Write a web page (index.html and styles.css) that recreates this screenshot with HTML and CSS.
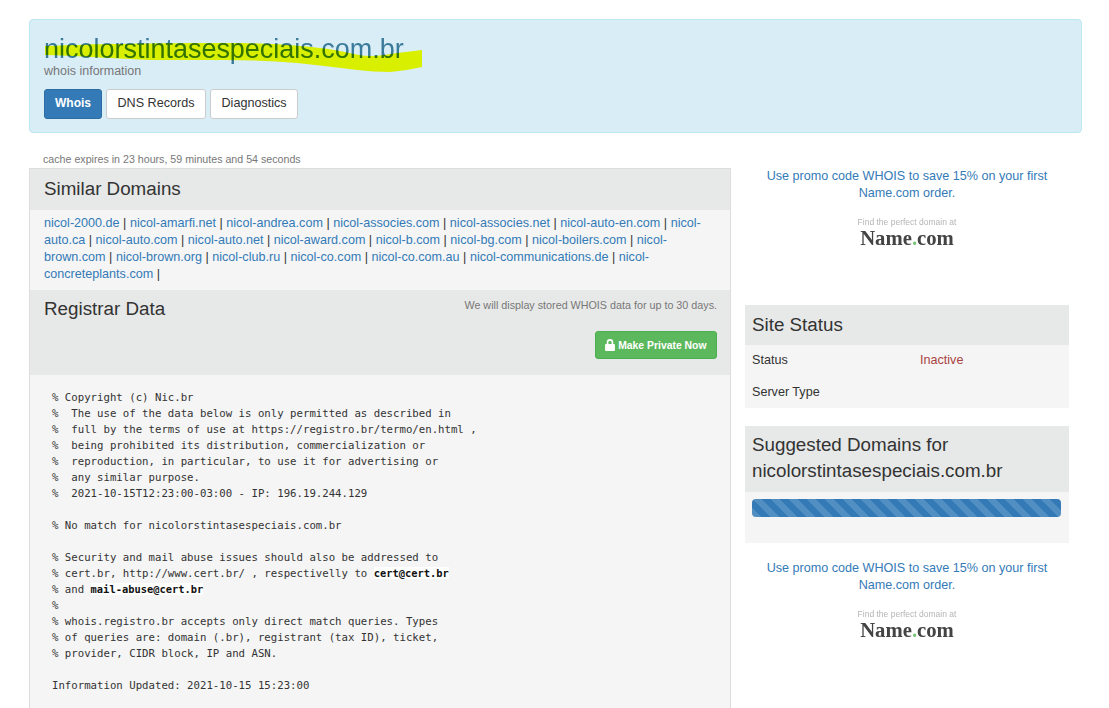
FILE: index.html
```html
<!DOCTYPE html>
<html lang="en">
<head>
<meta charset="utf-8">
<title>nicolorstintasespeciais.com.br whois</title>
<link rel="stylesheet" href="styles.css">
</head>
<body>
<div class="page">
  <header class="hero">
    <h1 class="domain"><svg class="marker" viewBox="0 0 380 34" aria-hidden="true"><path d="M1 4 C30 3 50 2 76 2 C110 1 150 1 181 1 C210 1 235 2 256 4 C265 5 270 5 276 6 C285 7 292 8 301 10 C310 12 318 14 326 14 C335 14 345 12 353 11 C362 10 370 9 378 8 L378 25 C368 27 358 29 346 30 C335 30 324 29 313 28 C295 26 275 23 253 21 C230 19 205 18 181 18 C155 18 130 18 106 18 C85 17 65 16 46 15 C30 14 15 13 1 13 Z" fill="#d9ef00"/></svg><span class="domain-text">nicolorstintasespeciais.com.br</span></h1>
    <div class="sub">whois information</div>
    <nav class="tabs">
      <a class="tab active">Whois</a>
      <a class="tab">DNS Records</a>
      <a class="tab">Diagnostics</a>
    </nav>
  </header>
  <div class="cache">cache expires in 23 hours, 59 minutes and 54 seconds</div>
  <div class="columns">
    <main class="left">
      <section>
        <h2 class="head">Similar Domains</h2>
        <div class="similar">
          <a>nicol-2000.de</a> | <a>nicol-amarfi.net</a> | <a>nicol-andrea.com</a> | <a>nicol-associes.com</a> | <a>nicol-associes.net</a> | <a>nicol-auto-en.com</a> | <a>nicol-auto.ca</a> | <a>nicol-auto.com</a> | <a>nicol-auto.net</a> | <a>nicol-award.com</a> | <a>nicol-b.com</a> | <a>nicol-bg.com</a> | <a>nicol-boilers.com</a> | <a>nicol-brown.com</a> | <a>nicol-brown.org</a> | <a>nicol-club.ru</a> | <a>nicol-co.com</a> | <a>nicol-co.com.au</a> | <a>nicol-communications.de</a> | <a>nicol-concreteplants.com</a> |
        </div>
      </section>
      <section>
        <div class="registrar">
          <div class="registrar-top">
            <h2 class="registrar-title">Registrar Data</h2>
            <span class="note">We will display stored WHOIS data for up to 30 days.</span>
          </div>
          <div class="registrar-action">
            <a class="private"><svg class="lock" viewBox="1.5 0.5 9 11" aria-hidden="true"><path d="M3 5V3.600a3 3 0 0 1 6 0V5h.6c.5 0 .9.4.9.9v4.600c0 .5-.4.9-.9.9H2.400c-.5 0-.9-.4-.9-.9V5.900c0-.5.4-.9.9-.9H3zm1.500 0h3V3.600a1.500 1.500 0 0 0-3 0V5z" fill="#fff"/></svg>Make Private Now</a>
          </div>
        </div>
        <pre class="whois">% Copyright (c) Nic.br
%  The use of the data below is only permitted as described in
%  full by the terms of use at https://registro.br/termo/en.html ,
%  being prohibited its distribution, commercialization or
%  reproduction, in particular, to use it for advertising or
%  any similar purpose.
%  2021-10-15T12:23:00-03:00 - IP: 196.19.244.129

% No match for nicolorstintasespeciais.com.br

% Security and mail abuse issues should also be addressed to
% cert.br, http://www.cert.br/ , respectivelly to <span class="mail">cert@cert.br</span>
% and <span class="mail">mail-abuse@cert.br</span>
%
% whois.registro.br accepts only direct match queries. Types
% of queries are: domain (.br), registrant (tax ID), ticket,
% provider, CIDR block, IP and ASN.

Information Updated: 2021-10-15 15:23:00</pre>
      </section>
    </main>
    <aside class="right">
      <div class="promo">
        <a class="promo-link">Use promo code WHOIS to save 15% on your first Name.com order.</a>
        <div class="logo"><span class="logo-small">Find the perfect domain at</span><span class="logo-name">Name<i class="dot">.</i>com</span></div>
      </div>
      <section class="card status">
        <h2 class="head side">Site Status</h2>
        <div class="status-body">
          <div class="status-row"><span class="label">Status</span><span class="inactive">Inactive</span></div>
          <div class="status-row"><span class="label">Server Type</span><span></span></div>
        </div>
      </section>
      <section class="card suggest">
        <h2 class="head side two">Suggested Domains for nicolorstintasespeciais.com.br</h2>
        <div class="suggest-body"><div class="bar"></div></div>
      </section>
      <div class="promo second">
        <a class="promo-link">Use promo code WHOIS to save 15% on your first Name.com order.</a>
        <div class="logo"><span class="logo-small">Find the perfect domain at</span><span class="logo-name">Name<i class="dot">.</i>com</span></div>
      </div>
    </aside>
  </div>
</div>
</body>
</html>
```
FILE: styles.css
```css
* { box-sizing: border-box; }
html, body { margin: 0; height: 708px; overflow: hidden; background: #fff; }
body { font-family: "Liberation Sans", Arial, sans-serif; font-size: 12.6px; line-height: 17px; color: #333; }
a { color: #337ab7; text-decoration: none; }
.page { padding: 19px 27px 0 29px; height: 708px; overflow: hidden; }
.hero { height: 114px; background: #d9edf7; border: 1px solid #bce8f1; border-radius: 4px; padding: 14px 14px 0; }
.domain { position: relative; margin: 0; font-size: 26.97px; font-weight: 400; line-height: 30px; color: #3a7a9a; isolation: isolate; }
.domain-text { position: relative; mix-blend-mode: multiply; }
.marker { position: absolute; left: 0; top: 8px; width: 380px; height: 34px; }
.sub { font-size: 12.5px; line-height: 14px; color: #777; }
.tabs { display: flex; gap: 4px; margin-top: 11px; }
.tab { height: 30px; padding: 0 10.5px; border: 1px solid #ccc; border-radius: 3px; background: #fff; color: #333; line-height: 26px; }
.tab.active { background: #337ab7; border-color: #2e6da4; color: #fff; font-weight: 700; font-size: 12px; padding: 0 10px; }
.cache { margin: 20px 0 0 14px; font-size: 10.67px; line-height: 13px; color: #777; }
.columns { display: flex; gap: 14px; margin-top: 2px; }
.left { width: 702px; height: 600px; border: 1px solid #ddd; border-bottom: 0; flex: none; background: #f5f5f5; }
.right { width: 324px; flex: none; }
.head { margin: 0; height: 41px; padding: 0 14px; background: #e7e9e8; font-size: 18.8px; font-weight: 400; line-height: 40px; color: #333; }
.similar { padding: 5px 14px 6px; height: 80px; }
.registrar { height: 85px; background: #e7e9e8; padding: 0 13px 0 14px; }
.registrar-top { display: flex; justify-content: space-between; }
.registrar-title { margin: 0; font-size: 18.8px; font-weight: 400; line-height: 38px; }
.note { font-size: 10.75px; line-height: 30px; color: #777; }
.registrar-action { display: flex; justify-content: flex-end; margin-top: 3px; }
.private { display: flex; align-items: center; height: 28px; padding: 0 9.5px; background: #5cb85c; border: 1px solid #4cae4c; border-radius: 3px; color: #fff; font-size: 10.4px; font-weight: 700; }
.lock { width: 10px; height: 12px; margin-right: 3px; }
.whois { margin: 0; padding: 15px 8px 8px 22px; font-family: "DejaVu Sans Mono", monospace; font-size: 10.7px; line-height: 16px; color: #333; background: #f5f5f5; }
.mail { background: #fff; color: #111; font-weight: 700; font-size: 10.4px; line-height: 0; }
.promo { text-align: center; padding: 0 16px; height: 137px; }
.promo-link { display: block; line-height: 17px; }
.logo { display: flex; flex-direction: column; align-items: center; margin-top: 16px; filter: blur(.35px); }
.logo-small { font-size: 8.5px; line-height: 9px; color: #b5b5b5; }
.logo-name { font-family: "Liberation Serif", serif; font-size: 20.7px; font-weight: 700; line-height: 22px; color: #444; }
.dot { color: #7ac77a; font-style: normal; }
.card { background: #f5f5f5; }
.head.side { padding: 0 7px; height: 40px; line-height: 40px; }
.status-body { height: 63px; padding: 7px 7px 0; }
.status-row { display: grid; grid-template-columns: 168px 1fr; height: 32px; line-height: 17px; }
.inactive { color: #a94442; }
.suggest { margin-top: 18px; }
.head.two { height: 66px; line-height: 26px; padding-top: 6px; }
.suggest-body { height: 51px; padding: 7px 8px 0 7px; }
.bar { height: 18px; border-radius: 4px; background-color: #337ab7; background-image: linear-gradient(45deg, rgba(255,255,255,.15) 25%, transparent 25%, transparent 50%, rgba(255,255,255,.15) 50%, rgba(255,255,255,.15) 75%, transparent 75%, transparent); background-size: 18px 18px; }
.promo.second { margin-top: 17px; }
```
